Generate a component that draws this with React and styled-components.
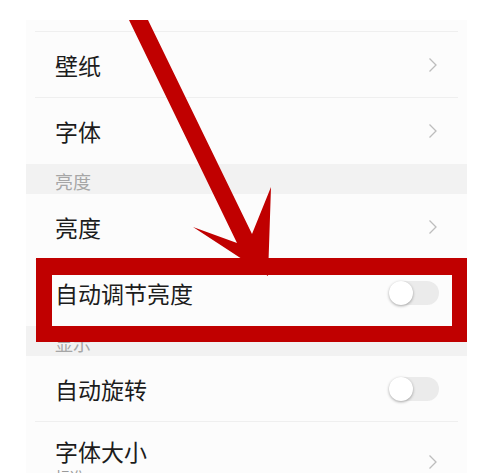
import React from "react";
import styled, { createGlobalStyle } from "styled-components";

const Global = createGlobalStyle`
    body{
        margin: 0;
        background: #ffffff;
        font-family: "Noto Sans CJK SC", "Noto Sans", sans-serif;
    }
`

// settings data
const sections = [
    { type: "row", label: "壁纸", action: "chevron" },
    { type: "row", label: "字体", action: "chevron", last: true },
    { type: "header", label: "亮度" },
    { type: "row", label: "亮度", action: "chevron" },
    { type: "row", label: "自动调节亮度", action: "toggle", last: true },
    { type: "header", label: "显示" },
    { type: "row", label: "自动旋转", action: "toggle" },
    { type: "row", label: "字体大小", sub: "标准", action: "chevron", tall: true },
];

const Chevron = () => (
    <svg width="10" height="16" viewBox="0 0 10 16">
        <path d="M1.5 1.5 L8 8 L1.5 14.5" fill="none" stroke="#bdbdbd" strokeWidth="1.3" />
    </svg>
);

const App = () => {
    return(
        <>
        <Global />
        <Page>
            <Screen>
                <TopStrip />
                {sections.map((item, i) =>
                    item.type === "header" ? (
                        <Header key={i}>{item.label}</Header>
                    ) : (
                        <Row key={i} last={item.last} tall={item.tall}>
                            <Texts>
                                <Label>{item.label}</Label>
                                {item.sub && <Sub>{item.sub}</Sub>}
                            </Texts>
                            {item.action === "chevron" ? <Chevron /> : <Toggle><Knob /></Toggle>}
                        </Row>
                    )
                )}
            </Screen>
            <Highlight />
            <Arrow viewBox="0 0 500 473" width="500" height="473">
                <polygon
                    fill="#c00000"
                    points="129,20 148,20 252,234 271,187 268,276 193,227 237,243"
                />
            </Arrow>
        </Page>
        </>
    )
}

const Page = styled.div`
    position: relative;
    width: 500px;
    height: 473px;
    overflow: hidden;
    padding-top: 20px;
    box-sizing: border-box;
`
const Screen = styled.div`
    margin-left: 26px;
    width: 441px;
    background: #fcfcfc;
`
const TopStrip = styled.div`
    height: 11px;
    margin: 0 9px;
    border-bottom: 1px solid #efefef;
`
const Row = styled.div`
    position: relative;
    height: ${p => p.tall ? "80px" : "66px"};
    display: flex;
    align-items: center;
    justify-content: space-between;
    padding: 0 29px 0 29px;
    box-sizing: border-box;
    &::after{
        content: "";
        display: ${p => p.last ? "none" : "block"};
        position: absolute;
        left: 9px;
        right: 9px;
        bottom: 0;
        height: 1px;
        background: #efefef;
    }
`
const Texts = styled.div`
    display: flex;
    flex-direction: column;
`
const Label = styled.span`
    font-size: 23px;
    color: #1c1c1c;
    line-height: 30px;
`
const Sub = styled.span`
    font-size: 15px;
    color: #9a9a9a;
    line-height: 22px;
`
const Header = styled.div`
    height: 30px;
    background: #f2f2f2;
    padding: 2px 0 0 29px;
    box-sizing: border-box;
    font-size: 18px;
    line-height: 30px;
    color: #a6a6a6;
`
const Toggle = styled.div`
    position: relative;
    width: 49px;
    height: 24px;
    border-radius: 12px;
    background: #ebebeb;
    margin-right: -1px;
`
const Knob = styled.div`
    position: absolute;
    left: -1px;
    top: 0;
    width: 24px;
    height: 24px;
    border-radius: 50%;
    background: #ffffff;
    box-shadow: 0 1px 3px rgba(0,0,0,0.35);
`
const Highlight = styled.div`
    position: absolute;
    left: 36px;
    top: 258px;
    width: 431px;
    height: 84px;
    box-sizing: border-box;
    border-style: solid;
    border-color: #c00000;
    border-width: 17px 15px 16px 16px;
`
const Arrow = styled.svg`
    position: absolute;
    left: 0;
    top: 0;
    pointer-events: none;
`

export default App;
